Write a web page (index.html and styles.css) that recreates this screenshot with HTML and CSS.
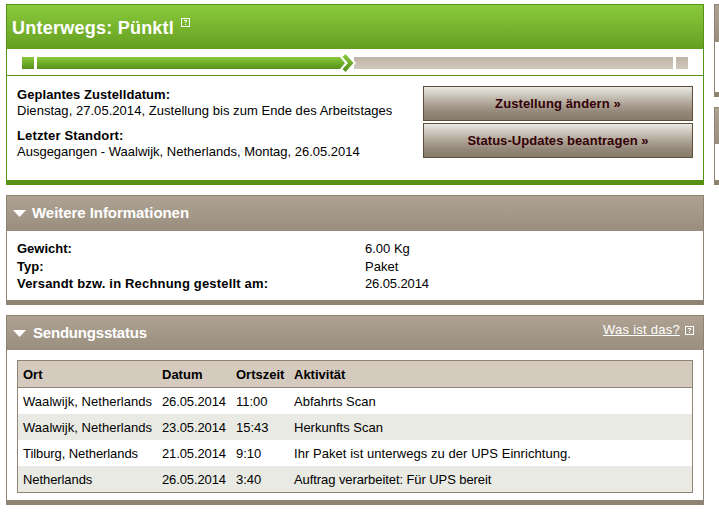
FILE: index.html
```html
<!DOCTYPE html>
<html lang="de">
<head>
<meta charset="utf-8">
<title>Sendungsverfolgung</title>
<link rel="stylesheet" href="styles.css">
</head>
<body>
<div class="page">
  <main class="main">
    <section class="panel panel-green">
      <header class="status-head">
        <h1>Unterwegs: Pünktl</h1>
        <svg class="help" width="9" height="9" viewBox="0 0 9 9" shape-rendering="crispEdges"><path d="M0 0h9v9H0zM1 1v7h7V1z" fill="#fff" fill-rule="evenodd"/><path d="M3 2h3v1h-3zM5 3h1v1h-1zM4 4h1v1h-1zM4 6h1v1h-1z" fill="#fff"/></svg>
      </header>
      <div class="progress">
        <span class="seg done cap"></span>
        <span class="seg done run"></span>
        <svg class="chevron" width="18" height="18" viewBox="0 0 18 18">
          <defs><linearGradient id="g" x1="0" y1="0" x2="0" y2="1"><stop offset="0" stop-color="#8ac93b"/><stop offset="1" stop-color="#56901a"/></linearGradient></defs>
          <path d="M0 2.500 5.500 9 0 15.500 3.500 18H8.500L16 9 8.500 0H3.500z" fill="#fff"/>
          <path d="M0 3V15L5 9z" fill="url(#g)"/>
          <path d="M5.500 0 13.500 9 5.500 18 2.500 15 8 9 2.500 3z" fill="url(#g)"/>
        </svg>
        <span class="seg open rest"></span>
        <span class="seg open cap"></span>
      </div>
      <div class="summary">
        <dl class="facts">
          <dt class="t-plan">Geplantes Zustelldatum:</dt>
          <dd class="t-date">Dienstag, 27.05.2014, Zustellung bis zum Ende des Arbeitstages</dd>
          <dt class="t-loc">Letzter Standort:</dt>
          <dd>Ausgegangen - Waalwijk, Netherlands, Montag, 26.05.2014</dd>
        </dl>
        <div class="actions">
          <button class="t-chg">Zustellung ändern »</button>
          <button class="t-upd">Status-Updates beantragen »</button>
        </div>
      </div>
    </section>

    <section class="panel info">
      <header class="head"><svg class="tri" width="13" height="7" viewBox="0 0 13 7"><path d="M0 0h13L6.500 7z" fill="#fff"/></svg><h2>Weitere Informationen</h2></header>
      <dl class="details">
        <dt>Gewicht:</dt><dd>6.00 Kg</dd>
        <dt>Typ:</dt><dd>Paket</dd>
        <dt class="t-ship">Versandt bzw. in Rechnung gestellt am:</dt><dd class="t-num">26.05.2014</dd>
      </dl>
    </section>

    <section class="panel history">
      <header class="head"><svg class="tri" width="13" height="7" viewBox="0 0 13 7"><path d="M0 0h13L6.500 7z" fill="#fff"/></svg><h2>Sendungsstatus</h2>
        <div class="what"><a href="#">Was ist das?</a><svg width="9" height="9" viewBox="0 0 9 9" shape-rendering="crispEdges"><path d="M0 0h9v9H0zM1 1v7h7V1z" fill="#fff" fill-rule="evenodd"/><path d="M3 2h3v1h-3zM5 3h1v1h-1zM4 4h1v1h-1zM4 6h1v1h-1z" fill="#fff"/></svg></div>
      </header>
      <table>
        <colgroup><col class="c1"><col class="c2"><col class="c3"><col></colgroup>
        <thead><tr><th>Ort</th><th>Datum</th><th>Ortszeit</th><th>Aktivität</th></tr></thead>
        <tbody>
          <tr><td class="t-wide">Waalwijk, Netherlands</td><td class="t-num">26.05.2014</td><td>11:00</td><td>Abfahrts Scan</td></tr>
          <tr><td class="t-wide">Waalwijk, Netherlands</td><td class="t-num">23.05.2014</td><td>15:43</td><td>Herkunfts Scan</td></tr>
          <tr><td class="t-tight">Tilburg, Netherlands</td><td class="t-num">21.05.2014</td><td>9:10</td><td class="t-wide">Ihr Paket ist unterwegs zu der UPS Einrichtung.</td></tr>
          <tr><td class="t-tight">Netherlands</td><td class="t-num">26.05.2014</td><td>3:40</td><td class="t-tight">Auftrag verarbeitet: Für UPS bereit</td></tr>
        </tbody>
      </table>
    </section>
  </main>
  <aside class="side">
    <section class="panel side-a"><div class="side-head"></div></section>
    <section class="panel side-b"><div class="side-head"></div></section>
  </aside>
</div>
</body>
</html>
```
FILE: styles.css
```css
* { box-sizing: border-box; }
html, body { margin: 0; height: 524px; overflow: hidden; background: #fff; }
body { font: 13px/16px "Liberation Sans", Arial, sans-serif; color: #000; }
h1, h2, dl, dd { margin: 0; }
dt, th { font-weight: bold; }
svg { display: block; flex: none; }

.page { display: flex; gap: 10px; padding: 4px 0 0 6px; width: 719px; overflow: hidden; }
.main { display: flex; flex-direction: column; gap: 10px; flex: 0 0 698px; }
.side { display: flex; flex-direction: column; gap: 10px; flex: 0 0 180px; }

.panel { border: 1px solid #8f8474; border-bottom-width: 5px; background: #fff; }
.panel-green { border-color: #579217; height: 181px; }

.status-head { display: flex; height: 44px; padding: 0 5px; background: linear-gradient(#8aca3c, #659f22); color: #fff; }
.status-head h1 { width: 162px; font-size: 18px; line-height: 46px; white-space: nowrap; letter-spacing: 0.24px; }
.help { margin: 13px 0 0 7px; }

.progress { display: flex; align-items: center; height: 27px; padding: 2px 15px 0; border-bottom: 1px solid #579217; }
.seg { height: 12px; }
.done { background: linear-gradient(#8ac93b, #56901a); }
.open { background: linear-gradient(#bdb3a6, #d2c9bd); }
.cap { width: 12px; }
.run { width: 303px; margin-left: 3px; }
.chevron { margin-right: -4px; position: relative; }
.rest { flex: 1; margin-right: 3px; }

.summary { display: flex; justify-content: space-between; padding: 10px 10px 0; }
.facts { padding-top: 1px; white-space: nowrap; }
.facts dd + dt { margin-top: 9px; }
.actions { display: flex; flex-direction: column; gap: 2px; width: 270px; }
.actions button { height: 35px; padding: 0; border: 1px solid #5c4f39; background: linear-gradient(#e8e8e2, #b2a89a 48%, #94887a 75%, #8a7c6b); color: #330006; font: bold 13px/16px "Liberation Sans", Arial, sans-serif; }

.head { display: flex; align-items: center; padding: 0 9px 0 6px; background: linear-gradient(#aea393, #9a8e7e); color: #fff; }
.head h2 { font-size: 15px; line-height: 18px; margin-left: 6px; white-space: nowrap; letter-spacing: -0.05px; }
.info { height: 110px; }
.info .head { height: 35px; }
.info h2 { padding-bottom: 2px; }
.details { display: grid; grid-template-columns: 348px 1fr; grid-template-rows: 18px 17px 18px; padding: 10px 10px 0; }
.history { height: 190px; }
.history .head { height: 34px; }
.history h2 { margin-left: 7px; letter-spacing: -0.2px; }
.what { display: flex; gap: 5px; margin: -6px 0 0 auto; align-items: center; }
.what a { color: #fff; letter-spacing: 0.25px; }

table { width: 676px; margin: 10px 0 0 10px; border: 1px solid #8f8474; border-collapse: separate; border-spacing: 0; table-layout: fixed; }
th, td { height: 26px; padding: 2px 5px 0; text-align: left; white-space: nowrap; }
th { height: 27px; background: #d4cbbe; border-bottom: 1px solid #8f8474; }
tbody tr:nth-child(even) { background: #e9eae4; }
.c1 { width: 139px; }
.c2 { width: 74px; }
.c3 { width: 58px; }

.t-plan { letter-spacing: 0.06px; }
.t-date { letter-spacing: 0.04px; }
.t-loc { letter-spacing: 0.15px; }
.t-ship { letter-spacing: 0.18px; }
.t-num { letter-spacing: -0.12px; }
.t-wide { letter-spacing: 0.05px; }
.t-tight { letter-spacing: -0.08px; }
.actions .t-chg { letter-spacing: 0.12px; }
.actions .t-upd { letter-spacing: 0.05px; }

.side-a { height: 93px; }
.side-b { height: 78px; }
.side-head { height: 37px; background: linear-gradient(#aea393, #9a8e7e); }
.side-b .side-head { height: 36px; }
```
